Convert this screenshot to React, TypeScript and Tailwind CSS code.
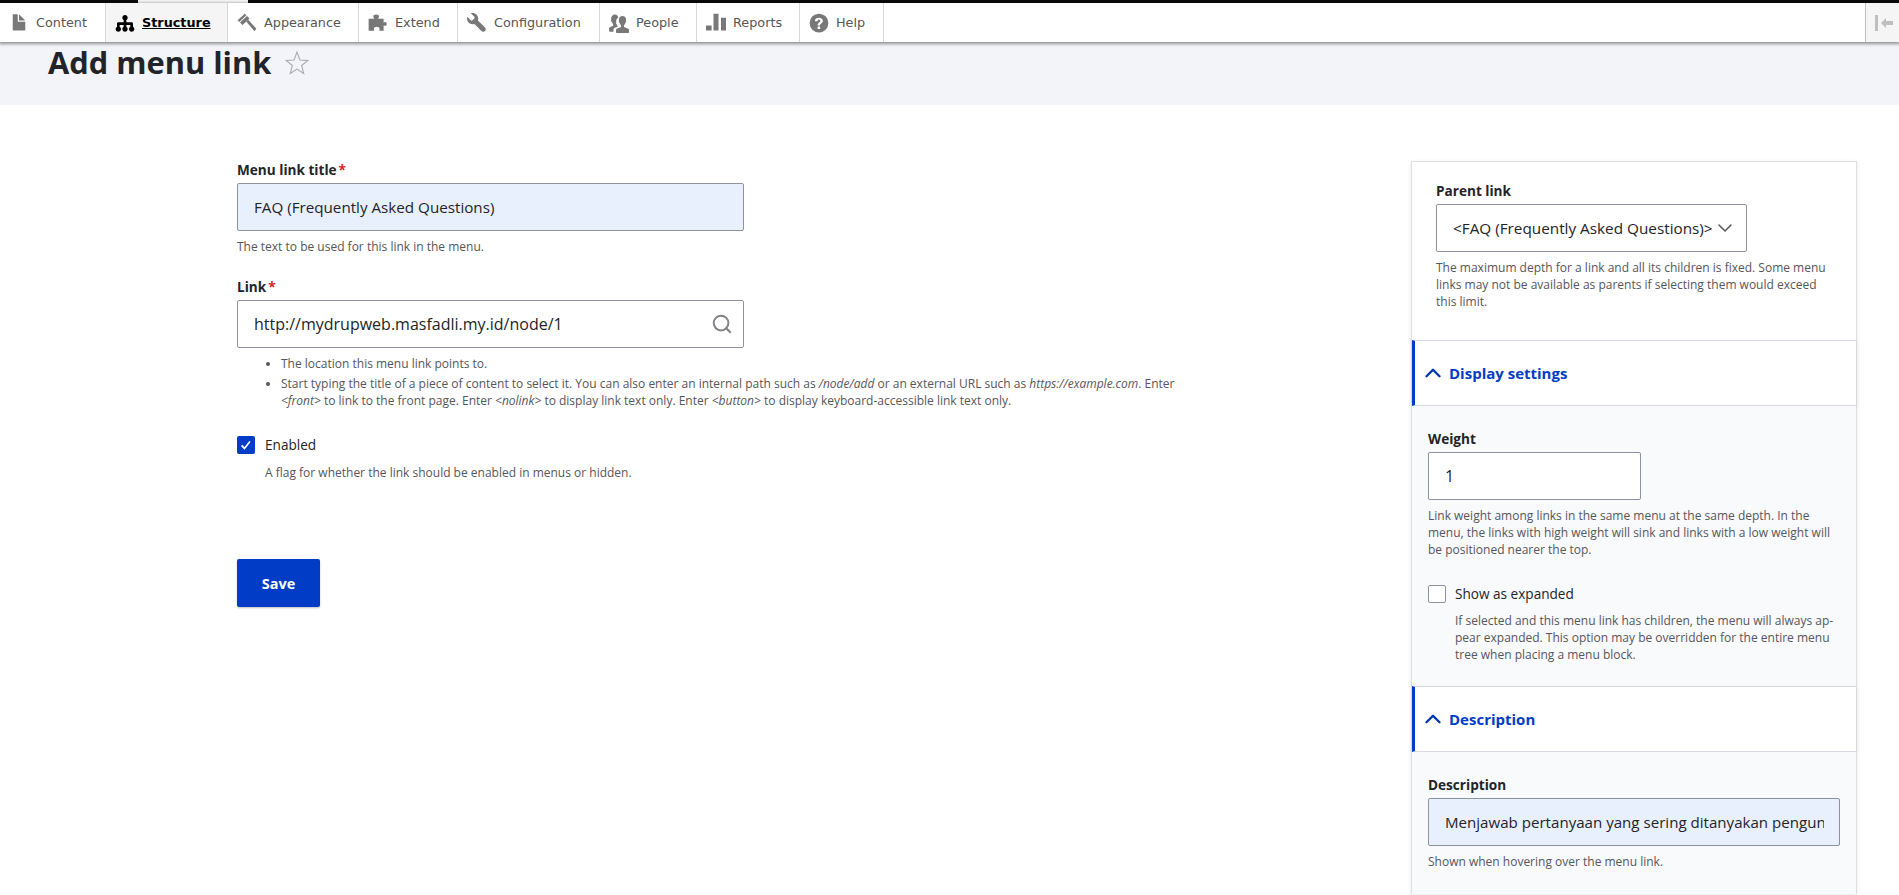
import { ChevronDown, ChevronUp, Search } from 'lucide-react';
import type { ReactNode } from 'react';

const fileIcon = 'M12.502 7h-5c-.276 0-.502-.225-.502-.5v-5c0-.275-.225-.5-.5-.5h-3c-.275 0-.5.225-.5.5v12.029c0 .275.225.5.5.5h9.002c.275 0 .5-.225.5-.5v-6.029c0-.275-.225-.5-.5-.5zM8.502 6h4c.275 0 .34-.159.146-.354l-4.293-4.292c-.195-.195-.353-.129-.353.146v4c0 .275.225.5.5.5z';
const hierarchyIcon = 'M15.002 11.277v-2.277c0-.553-.447-1-1-1h-4v-1.723c.596-.347 1-.984 1-1.723 0-1.104-.896-2-2-2s-2 .896-2 2c0 .738.404 1.376 1 1.723v1.723h-4c-.553 0-1 .447-1 1v2.277c-.596.347-1 .984-1 1.723 0 1.104.896 2 2 2s2-.896 2-2c0-.738-.403-1.376-1-1.723v-1.277h3v1.277c-.597.347-1 .984-1 1.723 0 1.104.896 2 2 2s2-.896 2-2c0-.738-.404-1.376-1-1.723v-1.277h3v1.277c-.597.347-1 .984-1 1.723 0 1.104.896 2 2 2s2-.896 2-2c0-.738-.404-1.376-1-1.723z';
const brushIcon = 'M6.200.5l-5.700 5.300 1.300 1.300 5.700-5.300zM8 2.400l-5.600 5.200 2 2 5.600-5.200zM7.500 6.900l1.500-1.500 6.500 7.100-1.500 2z';
const puzzleIcon = 'M.5 4.500h4.200c.2 0 .2-.4 0-.7-.3-.4-.5-.7-.5-1.100 0-.9 1-1.500 2.300-1.500s2.300.6 2.300 1.500c0 .4-.2.7-.5 1.100-.2.3-.2.7 0 .7h4.200v3.200c.3-.2.7-.5 1.100-.5.9 0 1.400.7 1.400 1.500s-.5 1.500-1.400 1.500c-.4 0-.8-.3-1.100-.5v4.400h-3.500c0-.6.3-1 .3-1.500 0-.9-1-1.600-2.300-1.600s-2.300.7-2.300 1.600c0 .5.3.9.3 1.500h-4.500z';
const wrenchIcon = 'M14.416 11.586l-.01-.008v-.001l-5.656-5.656c.15-.449.25-.921.25-1.420 0-2.485-2.015-4.500-4.500-4.500-.5 0-.972.1-1.420.25l2.742 2.742c.391.391.391 1.023 0 1.414l-1.414 1.414c-.391.391-1.023.391-1.414 0l-2.742-2.742c-.15.448-.25.92-.25 1.420 0 2.485 2.015 4.500 4.500 4.500.499 0 .971-.1 1.420-.25l5.656 5.657v.001l.001.008c.781.781 2.047.781 2.828 0 .781-.781.781-2.048 0-2.829z';
const peopleIcon = 'M6.400 11.100l.6-.3c-.4-.4-.8-1.100-.9-1.800-.3-.2-.5-.6-.5-1 0-.3.1-.5.2-.7-.1-.5-.1-1 0-1.500.2-1 .8-1.800 1.700-2.300-.4-1.500-1.500-2.400-2.800-2.400-1.600 0-3 1.400-3 3.400 0 .4 0 .8.1 1.100-.1.1-.2.3-.2.5 0 .4.3.8.6.9.2.8.6 1.400 1.100 1.900v1.200l-2.600 1.200c-.4.2-.6.5-.6.9v2.200c0 .3.3.6.6.6h2.900v-1.600c0-.7.4-1.300 1-1.600zM15.400 12.500l-3.400-1.400v-1.300c.5-.5.9-1.200 1.100-2 .3-.2.6-.5.6-.9 0-.2-.1-.4-.2-.6.1-.3.2-.7.2-1.100 0-1.700-1.200-2.900-2.900-2.900s-2.900 1.200-2.900 2.900c0 .4.1.8.2 1.100-.1.2-.2.4-.2.6 0 .4.3.7.6.9.2.8.6 1.500 1.100 2v1.300l-3.400 1.400c-.4.2-.6.5-.6.9v2c0 .3.3.6.6.6h9.200c.3 0 .6-.3.6-.6v-2c0-.4-.2-.7-.6-.9z';
const barsIcon = 'M0 10h4.500v4h-4.500zM6 .6h4v13.400h-4zM12 3.800h4v10.200h-4z';
const helpIcon = 'M8 .5a7.500 7.500 0 1 0 0 15 7.500 7.500 0 0 0 0-15zM8.900 12.700h-2v-2h2zM10.600 7.500c-.3.400-.7.700-1.100 1-.3.200-.500.400-.6.600-.1.200-.1.500-.1.800h-1.900c0-.500 0-.900.200-1.200.1-.300.500-.700 1-1.100.300-.200.500-.400.700-.600.100-.200.200-.400.200-.700 0-.300-.100-.500-.300-.700-.200-.200-.500-.300-.800-.300-.400 0-.600.100-.800.300-.200.200-.300.500-.300.900h-2c0-1 .300-1.700.900-2.100.500-.400 1.200-.600 2.100-.600 1 0 1.800.200 2.400.700.600.500.900 1.100.900 1.900 0 .500-.100.800-.500 1.100z';

const tabs = [
  { label: 'Content', icon: fileIcon, view: '0 0 16 16', width: 'w-[106px]', active: false },
  { label: 'Structure', icon: hierarchyIcon, view: '1.500 1 15 15', width: 'w-[122px]', active: true },
  { label: 'Appearance', icon: brushIcon, view: '0 0 16 16', width: 'w-[131px]', active: false },
  { label: 'Extend', icon: puzzleIcon, view: '0 0 16 16', width: 'w-[99px]', active: false },
  { label: 'Configuration', icon: wrenchIcon, view: '0 0 16 16', width: 'w-[142px]', active: false },
  { label: 'People', icon: peopleIcon, view: '0 0 16 16', width: 'w-[97px]', active: false },
  { label: 'Reports', icon: barsIcon, view: '0 0 16 16', width: 'w-[103px]', active: false },
  { label: 'Help', icon: helpIcon, view: '0 0 16 16', width: 'w-[84px]', active: false },
];

const Label = ({ children, required }: { children: ReactNode; required?: boolean }) => (
  <div className="mb-1 h-[18px] text-[13.6px] leading-[18px] font-bold text-[#232429]">
    {children}
    {required && <span className="ml-[2px] text-[#dc2323]">*</span>}
  </div>
);

const TextBox = ({ children, className }: { children: ReactNode; className: string }) => (
  <div className={`flex h-[48px] items-center overflow-hidden rounded-[2px] border border-[#8e929c] pl-[16px] whitespace-nowrap text-[#232429] ${className}`}>
    {children}
  </div>
);

const Help = ({ children, className = '' }: { children: ReactNode; className?: string }) => (
  <div className={`text-[12px] leading-[17px] text-[#55565b] ${className}`}>{children}</div>
);

const SectionHeader = ({ title }: { title: string }) => (
  <div className="flex h-[66px] items-center gap-[3px] border-y border-[#d8d9e0] border-l-[3px] border-l-[#003cc5] bg-white pl-[5px] text-[15px] font-bold text-[#003cc5] shadow-[0_1px_3px_rgba(0,0,0,0.08)]">
    <ChevronUp size={26} strokeWidth={2.2} className="text-[#0036b1]" />
    {title}
  </div>
);

export default function App() {
  return (
    <div className="h-[895px] overflow-hidden bg-white font-['Open_Sans',sans-serif]">
      {/* Toolbar */}
      <div className="flex h-[3px]">
        <div className="w-[138px] bg-[#0a0a0a]" />
        <div className="w-[110px] bg-[#f5f5f5]" />
        <div className="flex-1 bg-[#0a0a0a]" />
      </div>
      <div className="relative z-10 flex h-[39px] bg-white shadow-[0_1px_3px_1px_rgba(0,0,0,0.4)] font-['DejaVu_Sans',sans-serif]">
        {tabs.map((tab) => (
          <div
            key={tab.label}
            className={`flex items-center gap-[7px] border-r border-[#d8d8d8] pl-[9px] text-[12.8px] ${tab.width} ${tab.active ? 'bg-[#f5f5f5] font-bold text-black underline' : 'text-[#565656]'}`}
          >
            <svg viewBox={tab.view} className="h-[20px] w-[20px] shrink-0" fill={tab.active ? '#000000' : '#787878'}>
              <path d={tab.icon} fillRule="evenodd" />
            </svg>
            {tab.label}
          </div>
        ))}
        <div className="ml-auto flex w-[34px] items-center justify-end border-l border-[#bfbfbf] bg-[#f5f5f5] pr-[5px]">
          <svg viewBox="0 0 20 16" className="h-[16px] w-[20px]" fill="#bfbfbf">
            <path d="M1 0h3v16h-3zM7 8l5-5v3h7v4h-7v3z" />
          </svg>
        </div>
      </div>

      {/* Page title */}
      <div className="flex h-[63px] items-start gap-[13px] bg-[#f3f4f9] pl-[48px] text-[#232429]">
        <h1 className="mt-[2px] text-[30.8px] leading-[36px] font-bold">Add menu link</h1>
        <svg viewBox="0 0 24 24" className="mt-[8px] h-[26px] w-[26px]" fill="none" stroke="#a9aab0" strokeWidth="1">
          <path d="M12 2l2.700 7.200 7.300.400-5.700 4.700 1.900 7.400-6.200-4.100-6.200 4.100 1.900-7.400-5.700-4.700 7.300-.400z" />
        </svg>
      </div>

      <div className="flex pt-[56px] pl-[237px]">
        {/* Main form */}
        <div className="w-[1174px]">
          <div className="w-[507px]">
            <Label required>Menu link title</Label>
            <TextBox className="bg-[#e8f0fe] text-[15.2px]">FAQ (Frequently Asked Questions)</TextBox>
            <Help className="mt-[7px]">The text to be used for this link in the menu.</Help>
            <div className="mt-[23px]">
              <Label required>Link</Label>
              <TextBox className="justify-between bg-white pr-[10px] text-[16px]">
                http://mydrupweb.masfadli.my.id/node/1
                <Search size={22} strokeWidth={2.2} className="text-[#828388]" />
              </TextBox>
            </div>
          </div>
          <ul className="mt-[7px] w-[945px] list-disc pl-[44px] text-[12px] leading-[17px] text-[#55565b]">
            <li>The location this menu link points to.</li>
            <li className="mt-[3px]">
              Start typing the title of a piece of content to select it. You can also enter an internal path such as <em>/node/add</em> or an external URL such as <em>https://example.com</em>. Enter <em>&lt;front&gt;</em> to link to the front page. Enter <em>&lt;nolink&gt;</em> to display link text only. Enter <em>&lt;button&gt;</em> to display keyboard-accessible link text only.
            </li>
          </ul>
          <div className="mt-[26px] flex items-center gap-[10px] text-[13.6px] text-[#232429]">
            <div className="flex h-[18px] w-[18px] items-center justify-center rounded-[2px] bg-[#003cc5]">
              <svg viewBox="0 0 16 16" className="h-[14px] w-[14px]" fill="none" stroke="white" strokeWidth="2">
                <path d="M3 8.500l3.200 3.500 6.300-8" />
              </svg>
            </div>
            Enabled
          </div>
          <Help className="mt-[9px] ml-[28px]">A flag for whether the link should be enabled in menus or hidden.</Help>
          <button className="mt-[78px] h-[48px] w-[83px] rounded-[2px] bg-[#003cc5] text-[14.5px] font-bold text-white shadow-[0_1px_2px_rgba(0,0,0,0.25)]">
            Save
          </button>
        </div>

        {/* Sidebar */}
        <div className="w-[446px] shrink-0 border-x border-t border-[#dedfe4] shadow-[0_1px_4px_rgba(0,0,0,0.1)]">
          <div className="h-[178px] px-[24px] pt-[20px]">
            <Label>Parent link</Label>
            <TextBox className="w-[311px] justify-between bg-white pr-[10px] text-[15.3px]">
              &lt;FAQ (Frequently Asked Questions)&gt;
              <ChevronDown size={24} strokeWidth={1.5} className="shrink-0 text-[#55565b]" />
            </TextBox>
            <Help className="mt-[7px] w-[400px]">
              The maximum depth for a link and all its children is fixed. Some menu links may not be available as parents if selecting them would exceed this limit.
            </Help>
          </div>
          <SectionHeader title="Display settings" />
          <div className="h-[280px] bg-[#f9fafc] px-[16px] pt-[24px]">
            <Label>Weight</Label>
            <TextBox className="w-[213px] bg-white text-[16px]">1</TextBox>
            <Help className="mt-[7px] w-[410px]">
              Link weight among links in the same menu at the same depth. In the menu, the links with high weight will sink and links with a low weight will be positioned nearer the top.
            </Help>
            <div className="mt-[26px] flex items-center gap-[9px] text-[13.6px] text-[#232429]">
              <div className="h-[18px] w-[18px] rounded-[2px] border border-[#8e929c] bg-white" />
              Show as expanded
            </div>
            <Help className="mt-[8px] ml-[27px] w-[385px]">
              If selected and this menu link has children, the menu will always ap&shy;pear expanded. This option may be overridden for the entire menu tree when placing a menu block.
            </Help>
          </div>
          <SectionHeader title="Description" />
          <div className="h-[142px] bg-[#f9fafc] px-[16px] pt-[24px]">
            <Label>Description</Label>
            <TextBox className="bg-[#e8f0fe] pr-[15px] text-[15.1px]">
              <div className="overflow-hidden">Menjawab pertanyaan yang sering ditanyakan pengunjung website</div>
            </TextBox>
            <Help className="mt-[7px]">Shown when hovering over the menu link.</Help>
          </div>
        </div>
      </div>
    </div>
  );
}
